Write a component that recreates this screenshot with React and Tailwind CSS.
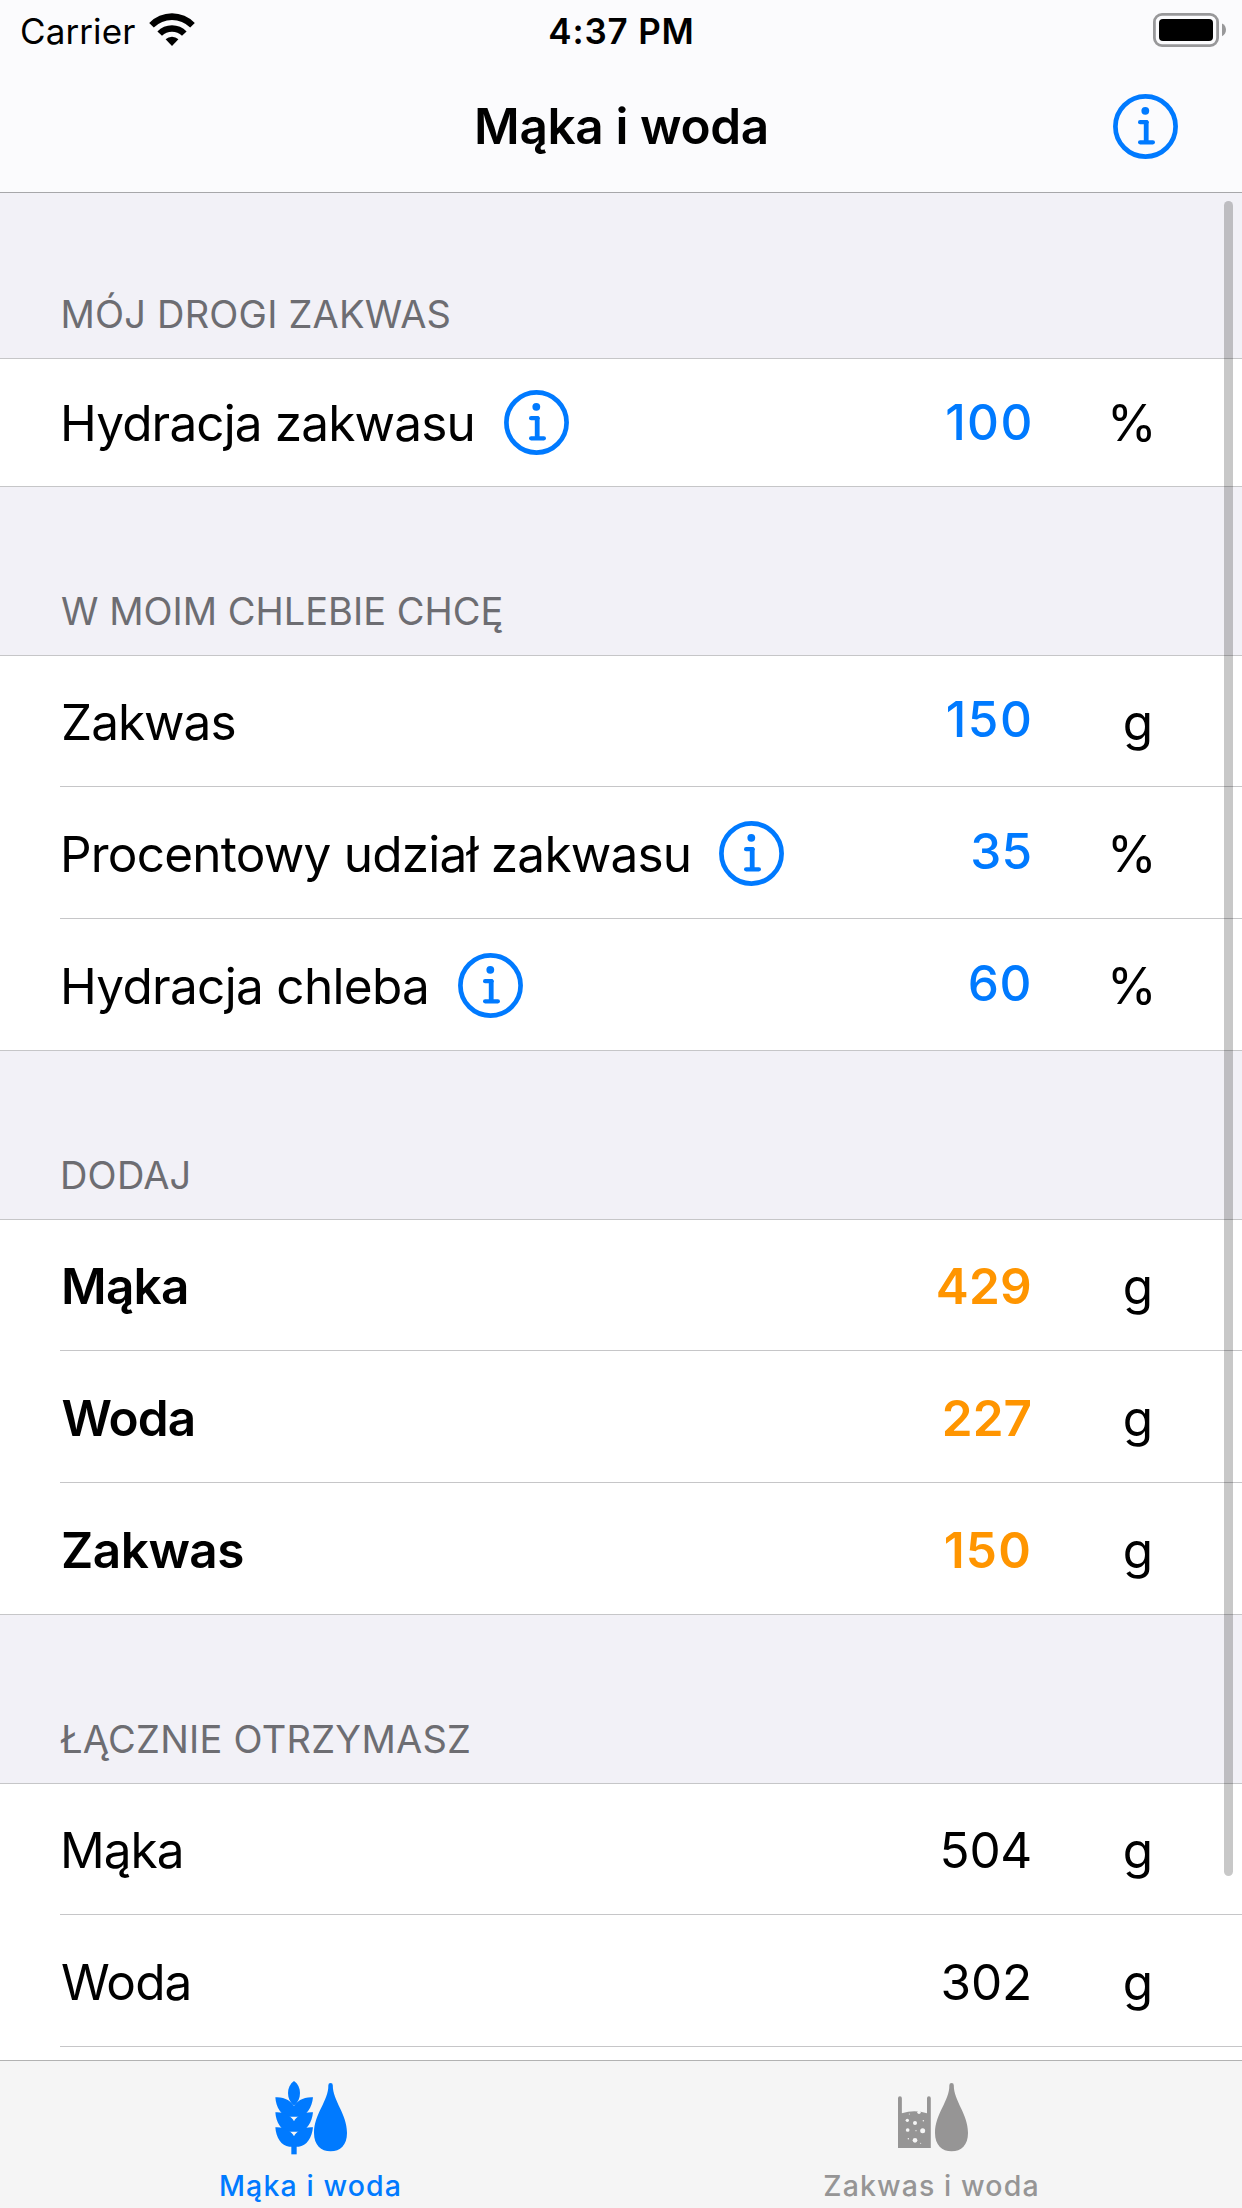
const BLUE = "font-medium text-[#007aff]";
const ORANGE = "font-semibold text-[#ff9500]";

const sections = [
  {
    title: "MÓJ DROGI ZAKWAS",
    titleClass: "h-[165px] pl-[60.5px] tracking-[0.2px]",
    rows: [
      {
        label: "Hydracja zakwasu",
        labelClass: "tracking-[-0.86px] pt-px",
        info: true,
        infoClass: "ml-[29.5px]",
        value: "100",
        valueClass: `${BLUE} tracking-[1.4px] -mr-[1.8px] pb-px`,
        unit: "%",
        height: "h-[127px]",
      },
    ],
  },
  {
    title: "W MOIM CHLEBIE CHCĘ",
    titleClass: "h-[168px] pl-[61px]",
    rows: [
      {
        label: "Zakwas",
        labelClass: "pl-px tracking-[-1px]",
        value: "150",
        valueClass: `${BLUE} tracking-[1.6px] -mr-[1.6px] pb-[6px]`,
        unit: "g",
        height: "h-[130px] pt-[2px]",
      },
      {
        label: "Procentowy udział zakwasu",
        labelClass: "tracking-[-0.78px]",
        info: true,
        infoClass: "ml-[28px]",
        value: "35",
        valueClass: `${BLUE} pb-[6px]`,
        unit: "%",
        height: "h-[132px] pt-[2px]",
      },
      {
        label: "Hydracja chleba",
        labelClass: "tracking-[-0.7px]",
        info: true,
        infoClass: "ml-[29px]",
        value: "60",
        valueClass: `${BLUE} tracking-[0.5px] pb-[6px]`,
        unit: "%",
        height: "h-[132px] pt-[2px]",
      },
    ],
  },
  {
    title: "DODAJ",
    titleClass: "h-[168px] pl-[60px] tracking-[0.2px]",
    rows: [
      {
        label: "Mąka",
        labelClass: "pl-px font-semibold tracking-[-0.75px]",
        value: "429",
        valueClass: `${ORANGE} tracking-[0.3px]`,
        unit: "g",
        height: "h-[130px] pt-[2px]",
      },
      {
        label: "Woda",
        labelClass: "pl-[1.5px] font-semibold tracking-[-0.9px]",
        value: "227",
        valueClass: ORANGE,
        unit: "g",
        height: "h-[132px] pt-[2px]",
      },
      {
        label: "Zakwas",
        labelClass: "pl-px font-semibold tracking-[-0.5px]",
        value: "150",
        valueClass: `${ORANGE} tracking-[1.2px]`,
        unit: "g",
        height: "h-[132px] pt-[2px]",
      },
    ],
  },
  {
    title: "ŁĄCZNIE OTRZYMASZ",
    titleClass: "h-[168px] pl-[60px] tracking-[0.25px]",
    rows: [
      {
        label: "Mąka",
        labelClass: "tracking-[-1px]",
        value: "504",
        valueClass: "tracking-[-0.3px]",
        unit: "g",
        height: "h-[130px] pt-[2px]",
      },
      {
        label: "Woda",
        labelClass: "pl-px tracking-[-0.9px]",
        value: "302",
        valueClass: "tracking-[-0.2px]",
        unit: "g",
        height: "h-[132px] pt-[2px]",
      },
      {
        label: "",
        labelClass: "",
        value: "",
        valueClass: "",
        unit: "",
        height: "h-[132px] pt-[2px]",
      },
    ],
  },
];

function InfoIcon() {
  return (
    <svg width="65" height="65" viewBox="0 0 65 65" fill="none" stroke="#007aff" className="block shrink-0">
      <circle cx="32.5" cy="32.5" r="30.1" strokeWidth="4.7" />
      <circle cx="32.3" cy="16.8" r="3.9" fill="#007aff" stroke="none" />
      <path d="M27.1 28.2H33.2" strokeWidth="4.2" strokeLinecap="round" />
      <path d="M33.2 27.2V48.3" strokeWidth="4.8" strokeLinecap="butt" />
      <circle cx="33.5" cy="28.2" r="2.1" fill="#007aff" stroke="none" />
      <path d="M27.1 48.3H39.9" strokeWidth="4.2" strokeLinecap="round" />
    </svg>
  );
}

function WifiIcon() {
  return (
    <svg width="46" height="33" viewBox="0 0 46 33" className="block">
      <path d="M0.2 10A31.5 31.5 0 0 1 45.8 10L41.2 14.4A26 26 0 0 0 4.8 14.4Z" />
      <path d="M8.4 18.5A20 20 0 0 1 37.6 18.5L33 22.8A14.3 14.3 0 0 0 13 22.8Z" />
      <path d="M16.6 26.3A9.4 9.4 0 0 1 29.4 26.3L23 33Z" />
    </svg>
  );
}

function BatteryIcon() {
  return (
    <svg width="74" height="34" viewBox="0 0 74 34" className="block">
      <rect x="1.4" y="1.4" width="63.2" height="31.2" rx="7.6" fill="none" stroke="#98989a" strokeWidth="2.8" />
      <rect x="6" y="6" width="54" height="22" rx="4" />
      <path d="M69 10.4C74.3 12.5 74.3 21 69 23.2Z" fill="#98989a" />
    </svg>
  );
}

const TIER =
  "M106 141C134 139 155 153 162 168C169 153 190 139 219 141C216 172 200 197 176 199H148C124 197 108 172 106 141Z";

function FlourWaterIcon() {
  return (
    <svg width="73" height="73" viewBox="102 92 219 219" fill="currentColor" className="block overflow-visible">
      <path d="M162 92C138 108 138 148 162 166C186 148 186 108 162 92Z" />
      <path d={TIER} />
      <path d={TIER} transform="translate(0 45)" />
      <path d={TIER} transform="translate(0 90)" />
      <rect x="154" y="284" width="16" height="28" />
      <path d="M265 105a6.7 6.7 0 0 1 13.4 0C278 152 321 190 321 248C321 284 301 303 272 303C243 303 222 284 222 248C222 190 266 152 265 105Z" />
    </svg>
  );
}

const BUBBLES = [
  [322, 210, 5], [345, 218, 6], [370, 211, 2.2], [323, 239, 5.5], [368, 241, 7.5], [348, 241, 1.8],
  [345, 270, 7], [325, 265, 2.2], [362, 279, 1.6], [357, 186, 5], [328, 191, 1.6],
];

function StarterWaterIcon() {
  return (
    <svg width="73" height="73" viewBox="285 92 219 219" fill="currentColor" className="block overflow-visible">
      <path d="M294 293V143.5a5.8 5.8 0 0 1 11.6 0V189Q343 177 381 189V143.5a5.7 5.7 0 0 1 11.4 0V293Z" />
      {BUBBLES.map(([x, y, r]) => (
        <circle key={`${x}-${y}`} cx={x} cy={y} r={r} fill="#f6f6f6" />
      ))}
      <path d="M448 105a6.7 6.7 0 0 1 13.4 0C461 152 504 190 504 248C504 284 484 303 455 303C426 303 405 284 405 248C405 190 449 152 448 105Z" />
    </svg>
  );
}

function Row({ row, first }) {
  return (
    <div className={`ml-[60px] flex items-center pr-[88px] text-[49.5px] leading-[60px] ${row.height} ${first ? "" : "border-t border-[#c6c6c8]"}`}>
      <span className={row.labelClass}>{row.label}</span>
      {row.info && (
        <span className={row.infoClass}>
          <InfoIcon />
        </span>
      )}
      <span className={`ml-auto ${row.valueClass}`}>{row.value}</span>
      <span className="w-[122px] text-right">
        <span className={row.unit === "%" ? "-mr-[2.5px] text-[50.5px]" : "mr-[1px]"}>{row.unit}</span>
      </span>
    </div>
  );
}

export default function App() {
  return (
    <div className="flex h-[2208px] w-[1242px] flex-col overflow-hidden bg-white font-['Inter',sans-serif] text-black">
      <header className="h-[193px] shrink-0 border-b border-[#a7a7aa] bg-[#fbfbfd]">
        <div className="grid h-[60px] grid-cols-3 text-[35px] leading-[42px]">
          <div className="flex items-start pl-5 pt-[10px]">
            <span className="tracking-[0.1px]">Carrier</span>
            <span className="ml-[14px] mt-[3px]">
              <WifiIcon />
            </span>
          </div>
          <div className="pl-px pt-[10px] text-center font-semibold tracking-[0.83px]">4:37 PM</div>
          <div className="flex justify-end pr-[15px] pt-[13px]">
            <BatteryIcon />
          </div>
        </div>
        <div className="grid h-[132px] grid-cols-[1fr_auto_1fr] items-start">
          <span />
          <h1 className="pl-px pt-[36px] text-[49.5px] font-semibold leading-[60px] tracking-[-0.37px]">Mąka i woda</h1>
          <span className="flex justify-end pr-16 pt-[34px]">
            <InfoIcon />
          </span>
        </div>
      </header>

      <main className="relative h-[1867px] shrink-0 overflow-hidden bg-[#f2f1f7]">
        {sections.map((s) => (
          <section key={s.title}>
            <h2 className={`flex items-end pb-[21px] text-[38px] leading-[46px] text-[#6d6d72] ${s.titleClass}`}>
              {s.title}
            </h2>
            <div className="border-y border-[#c6c6c8] bg-white">
              {s.rows.map((row, i) => (
                <Row key={i} row={row} first={i === 0} />
              ))}
            </div>
          </section>
        ))}
        <div className="absolute right-[9px] top-2 h-[1675px] w-[9px] rounded-full bg-black/[0.215]" />
      </main>

      <nav className="grid h-[148px] shrink-0 grid-cols-2 border-t border-[#b2b2b2] bg-[#f5f5f5] text-[28.5px] font-medium leading-[36px] tracking-[1.1px]">
        <div className="flex flex-col items-center pt-[20px] text-[#007aff]">
          <FlourWaterIcon />
          <span className="mt-[14px]">Mąka i woda</span>
        </div>
        <div className="flex flex-col items-center pt-[20px] text-[#969595]">
          <StarterWaterIcon />
          <span className="mt-[14px]">Zakwas i woda</span>
        </div>
      </nav>
    </div>
  );
}
